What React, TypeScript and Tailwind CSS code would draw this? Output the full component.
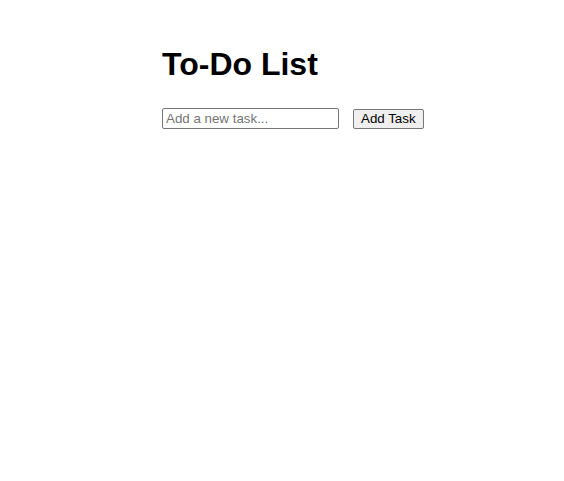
export default function App() {
  return (
    <div className="min-h-[481px] bg-white font-['Liberation_Sans',Arial,sans-serif] text-black">
      <div className="pl-[162px] pt-[46px]">
        <h1 className="text-[32px] font-bold leading-[37px]">To-Do List</h1>
        <div className="mt-[25px] flex items-center gap-[14px]">
          <input
            type="text"
            placeholder="Add a new task..."
            className="h-[21px] w-[177px] rounded-[2px] border border-[#767676] px-[3px] text-[13.33px] text-black placeholder:text-[#757575] outline-none"
          />
          <button className="h-[20px] rounded-[2px] border border-[#767676] bg-[#efefef] px-[7px] text-[13.33px] leading-[16px] text-black">
            Add Task
          </button>
        </div>
      </div>
    </div>
  );
}
